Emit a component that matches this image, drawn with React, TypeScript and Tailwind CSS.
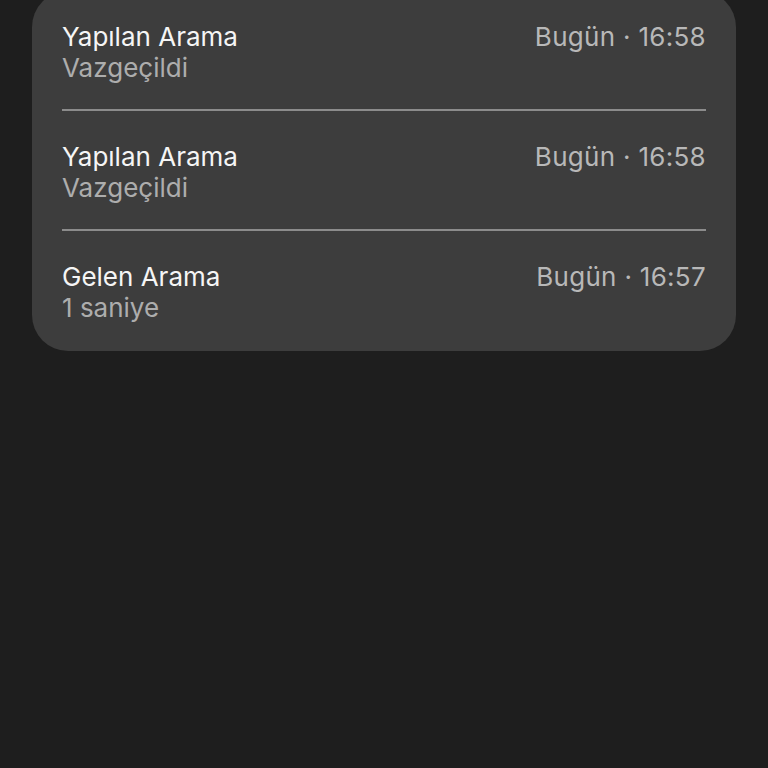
import React from "react";

const rows = [
  { title: "Yapılan Arama", sub: "Vazgeçildi", time: "Bugün · 16:58" },
  { title: "Yapılan Arama", sub: "Vazgeçildi", time: "Bugün · 16:58" },
  { title: "Gelen Arama", sub: "1 saniye", time: "Bugün · 16:57" },
];

export default function App() {
  return (
    <div
      className="w-[768px] h-[768px] overflow-hidden bg-[#1e1e1e]"
      style={{ fontFamily: "Inter, 'Noto Sans', sans-serif" }}
    >
      <div className="mx-[32px] mt-[-9px] rounded-[36px] bg-[#3d3d3d] px-[30px]">
        {rows.map((r, i) => (
          <div
            key={i}
            className={
              "flex justify-between pt-[30px] " +
              (i < rows.length - 1 ? "pb-[26px] border-b-2 border-[#8c8c8c]" : "pb-[28px]")
            }
          >
            <div className="flex flex-col text-[26px] leading-[31px]">
              <span className="text-[#f5f5f5]">{r.title}</span>
              <span className="text-[#adadad]">{r.sub}</span>
            </div>
            <div className="text-[26px] leading-[31px] tracking-[0.3px] text-[#b8b8b8]">{r.time}</div>
          </div>
        ))}
      </div>
    </div>
  );
}
